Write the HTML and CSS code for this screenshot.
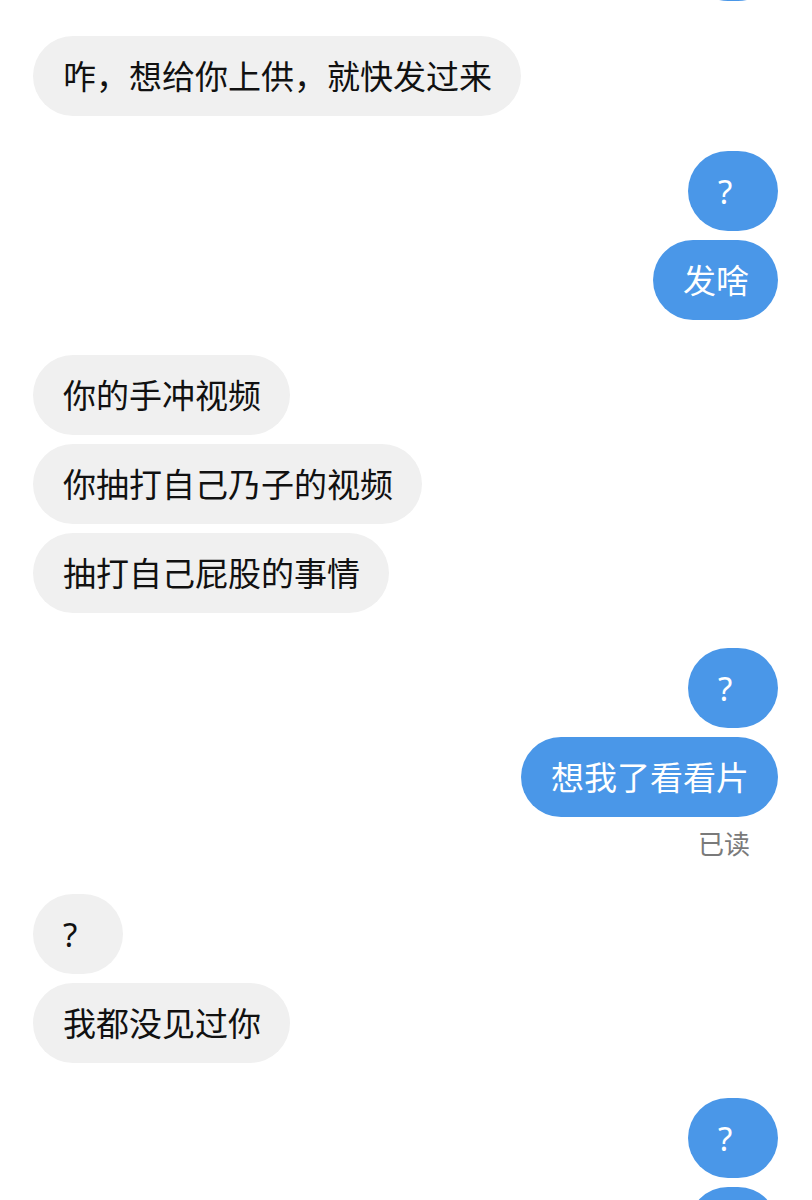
FILE: index.html
```html
<!DOCTYPE html>
<html>
<head>
    <meta charset="utf-8">
    <title>聊天记录</title>
    <link rel="stylesheet" href="styles.css">
</head>
<body>
    <div class="chat">
        <!-- tail of the previous message, cut off by the top of the screen -->
        <div class="group mine cut-top">
            <div class="bubble">?</div>
        </div>

        <div class="group theirs">
            <div class="bubble">咋，想给你上供，就快发过来</div>
        </div>

        <div class="group mine">
            <div class="bubble">?</div>
            <div class="bubble">发啥</div>
        </div>

        <div class="group theirs">
            <div class="bubble">你的手冲视频</div>
            <div class="bubble">你抽打自己乃子的视频</div>
            <div class="bubble">抽打自己屁股的事情</div>
        </div>

        <div class="group mine">
            <div class="bubble">?</div>
            <div class="bubble">想我了看看片</div>
            <div class="read">已读</div>
        </div>

        <div class="group theirs">
            <div class="bubble">?</div>
            <div class="bubble">我都没见过你</div>
        </div>

        <div class="group mine">
            <div class="bubble">?</div>
            <div class="bubble">?</div>
        </div>
    </div>
</body>
</html>
```

FILE: styles.css
```css
body {
    margin: 0;
    background-color: #ffffff;
    font-family: "Noto Sans", "Noto Sans CJK SC", sans-serif;
    overflow: hidden;
}

.chat {
    display: flex;
    flex-direction: column;
    padding: 0 34px 0 33px;
}

.group {
    display: flex;
    flex-direction: column;
    gap: 9px;
    margin-top: 35px;
}

.group.cut-top {
    margin-top: -79px;
}

.theirs {
    align-items: flex-start;
}

.mine {
    align-items: flex-end;
}

.bubble {
    box-sizing: border-box;
    height: 80px;
    min-width: 90px;
    padding: 0 29px 0 30px;
    border-radius: 40px;
    display: flex;
    align-items: center;
    font-size: 33px;
    line-height: 1;
    white-space: nowrap;
}

.theirs .bubble {
    background-color: #f0f0f0;
    color: #111111;
}

.mine .bubble {
    background-color: #4a97e8;
    color: #ffffff;
}

/* the read receipt sits under the last bubble of a group */
.read {
    margin: 3px 28px 0 0;
    font-size: 26px;
    line-height: 30px;
    color: #7a7a7a;
}
```
